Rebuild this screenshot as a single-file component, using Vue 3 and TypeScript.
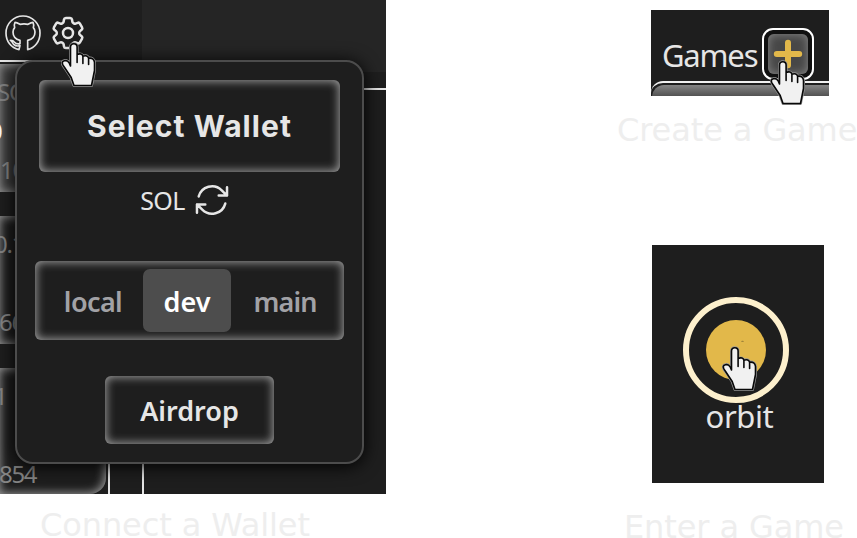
<script setup lang="ts">
import { ref, h } from 'vue'

interface Line { text: string; indent: number; bright?: boolean }
interface Card { id: number; active: boolean; lines: Line[] }

const cards: Card[] = [
  { id: 1, active: true, lines: [
    { text: 'SOL', indent: -3 }, { text: '0', indent: -11, bright: true }, { text: '10', indent: 0 } ] },
  { id: 2, active: false, lines: [
    { text: '0.1', indent: -6 }, { text: '', indent: 0 }, { text: '66', indent: -1 } ] },
  { id: 3, active: false, lines: [
    { text: '1', indent: -6 }, { text: '', indent: 0 }, { text: '854', indent: -1 } ] },
]

const networks = ['local', 'dev', 'main']
const network = ref('dev')

const hand = 'M9.500 24V5a3.3 3.3 0 0 1 6.600 0v7.500c3-1.300 5.200-.3 5.800 1.700 3-1 5-.2 5.700 2 3.300-.5 5.600 1 5.900 4.300v8L30.500 43.500H13l-2.800-8-6.600-10C1.900 23.300 1 21.700 1.300 20.500c.5-2 3.500-2.400 5.200-1.300 1.500 1 2.300 2.800 3 4.800z'

const HandCursor = () =>
  h('svg', { viewBox: '0 0 36 46', width: 36, height: 46 }, [
    h('path', { d: hand, fill: '#f1f1f1', stroke: '#999', 'stroke-width': 3, 'stroke-linejoin': 'round' }),
    h('path', {
      d: hand + 'M16.100 12v8.500M21.900 14.500v7M27.600 16.500v6',
      fill: '#f1f1f1', stroke: '#080808', 'stroke-width': 1.6, 'stroke-linejoin': 'round', 'stroke-linecap': 'round',
    }),
  ])
</script>

<template>
  <main class="guide">
    <figure class="wallet">
      <div class="shot app">
        <aside class="side">
          <header class="icons">
            <svg class="github" viewBox="0 0 108 108" width="36" height="36">
              <path d="M42 104C18 99 3 79 3 54a51 51 0 0 1 102 0c0 25-15 45-37 50V76c14-3 22-11 22-25 0-6-2-10-5-13 2-6 1-12-1-16-5 0-10 3-15 6-8-2-16-2-24 0-5-3-10-6-15-6-2 4-3 10-1 16-3 3-5 7-5 13 0 14 8 22 21 25v10c-8 2-13 0-17-5-3-4-7-6-12-5 6 3 6 8 10 12 5 5 12 6 19 4z" />
            </svg>
            <svg class="gear" viewBox="0 0 24 24" width="40" height="40">
              <path d="M9.594 3.94c.09-.542.56-.94 1.11-.94h2.593c.55 0 1.02.398 1.11.94l.213 1.281c.063.374.313.686.645.87.074.04.147.083.22.127.325.196.72.257 1.075.124l1.217-.456a1.125 1.125 0 0 1 1.37.49l1.296 2.247a1.125 1.125 0 0 1-.26 1.431l-1.003.827c-.293.241-.438.613-.43.992a7.723 7.723 0 0 1 0 .255c-.008.378.137.75.43.991l1.004.827c.424.35.534.955.26 1.43l-1.298 2.247a1.125 1.125 0 0 1-1.369.491l-1.217-.456c-.355-.133-.75-.072-1.076.124a6.47 6.47 0 0 1-.22.128c-.331.183-.581.495-.644.869l-.213 1.281c-.09.543-.56.94-1.11.94h-2.594c-.55 0-1.019-.398-1.11-.94l-.213-1.281c-.062-.374-.312-.686-.644-.87a6.52 6.52 0 0 1-.22-.127c-.325-.196-.72-.257-1.076-.124l-1.217.456a1.125 1.125 0 0 1-1.369-.49l-1.297-2.247a1.125 1.125 0 0 1 .26-1.431l1.004-.827c.292-.24.437-.613.43-.991a6.932 6.932 0 0 1 0-.255c.007-.38-.138-.751-.43-.992l-1.004-.827a1.125 1.125 0 0 1-.26-1.43l1.297-2.247a1.125 1.125 0 0 1 1.37-.491l1.216.456c.356.133.751.072 1.076-.124.072-.044.146-.086.22-.128.332-.183.582-.495.644-.869l.214-1.28Z" />
              <circle cx="12" cy="12" r="3" />
            </svg>
          </header>
          <div class="list">
            <article v-for="card in cards" :key="card.id" class="card" :class="{ active: card.active }">
              <span v-for="(line, i) in card.lines" :key="i" class="line" :class="{ bright: line.bright }"
                :style="{ textIndent: line.indent + 'px' }">{{ line.text }}</span>
            </article>
          </div>
        </aside>
        <section class="content">
          <div class="banner"></div>
          <div class="board"></div>
        </section>

        <div class="popover">
          <button class="glow select">Select Wallet</button>
          <div class="balance">
            <span>SOL</span>
            <svg viewBox="0 0 24 24" width="40" height="40">
              <path d="M16.023 9.348h4.992v-.001M2.985 19.644v-4.992m0 0h4.992m-4.993 0 3.181 3.183a8.25 8.25 0 0 0 13.803-3.7M4.031 9.865a8.25 8.25 0 0 1 13.803-3.7l3.181 3.182m0-4.991v4.99" />
            </svg>
          </div>
          <div class="glow networks">
            <button v-for="n in networks" :key="n" class="network" :class="[n, { on: n === network }]"
              @click="network = n">{{ n }}</button>
          </div>
          <button class="glow airdrop">Airdrop</button>
        </div>
        <HandCursor class="cursor on-gear" />
      </div>
      <figcaption class="c-wallet">Connect a Wallet</figcaption>
    </figure>

    <div class="right">
      <figure class="create">
        <div class="shot games">
          <div class="games-head">
            <span class="games-title">Games</span>
            <button class="add" aria-label="Add">
              <svg viewBox="0 0 40 40" width="40" height="40"><path d="M20 8.800v22.400M8.800 20h22.400" /></svg>
            </button>
          </div>
          <div class="games-list"><div class="games-card"></div></div>
          <HandCursor class="cursor on-add" />
        </div>
        <figcaption class="c-create">Create a Game</figcaption>
      </figure>
      <figure class="enter">
        <div class="shot orbit">
          <svg viewBox="0 0 108 108" width="108" height="108">
            <circle cx="54" cy="54" r="50" fill="none" stroke="#fdf0cd" stroke-width="6" />
            <circle cx="54" cy="54" r="30" fill="#e2b84a" />
            <ellipse cx="60.500" cy="45.300" rx="1.300" ry=".5" fill="#8d7434" />
          </svg>
          <span class="orbit-name">orbit</span>
          <HandCursor class="cursor on-orbit" />
        </div>
        <figcaption class="c-enter">Enter a Game</figcaption>
      </figure>
    </div>
  </main>
</template>

<style>
body { background: #fff; overflow: hidden; }
</style>

<style scoped>
* { box-sizing: border-box; }
.guide {
  display: flex; width: 857px; height: 538px; overflow: hidden;
  font-family: "Noto Sans", "Open Sans", sans-serif; color: #e6e6e6;
}
figure { margin: 0; }
button { font: inherit; color: inherit; border: 0; margin: 0; padding: 0; background: none; }
svg { display: block; flex: none; }
.shot { position: relative; background: #1e1e1e; }
figcaption {
  font: 32px/40px "DejaVu Sans", sans-serif; color: #eee; white-space: nowrap; letter-spacing: -.1px;
}
.wallet { width: 611px; }
.app { display: flex; width: 386px; height: 494px; overflow: hidden; }
.side { display: flex; flex-direction: column; width: 142px; flex: none; }
.icons { display: flex; align-items: center; height: 60px; padding: 6px 0 0 5px; gap: 7px; }
.github { fill: none; stroke: #e6e6e6; stroke-width: 5; stroke-linejoin: round; }
.gear, .balance svg { fill: none; stroke: #e6e6e6; stroke-width: 1.5; stroke-linecap: round; stroke-linejoin: round; }
.list {
  display: flex; flex-direction: column; gap: 24px; width: 110px; height: 434px;
  padding: 2px 2px 0 0; border: solid #e6e6e6; border-width: 2px 2px 0 0; overflow: hidden;
}
.card {
  display: flex; flex-direction: column; flex: none; height: 128px; padding-top: 11px;
  border-radius: 0 16px 16px 0; color: #858585; font-size: 24px;
  box-shadow: inset -1px 0 10px 1px #999;
}
.card:last-child { height: 126px; }
.card.active { background: #3b3b3b; }
.line { height: 40px; line-height: 34px; white-space: nowrap; letter-spacing: -1.3px; }
.bright { color: #fff; }
.card:last-child .line:last-child { padding-top: 1px; }
.content { flex: 1; display: flex; flex-direction: column; }
.banner { height: 72px; background: #252525; }
.board { flex: 1; margin-top: 16px; border: solid #e6e6e6; border-width: 2px 0 0 2px; }

.popover {
  position: absolute; left: 15px; top: 60px; width: 349px; height: 404px;
  display: flex; flex-direction: column; align-items: center; padding-top: 18px;
  background: #1e1e1e; border: 2px solid #4c4c4c; border-radius: 18px;
  box-shadow: 0 2px 18px #000;
}
.glow { border-radius: 6px; box-shadow: inset 0 0 10px 1px #a3a3a3; white-space: nowrap; }
.select { width: 301px; height: 92px; font: 700 30px/92px Inter, sans-serif; letter-spacing: 1.05px; }
.balance { display: flex; align-items: center; gap: 7px; height: 40px; margin: 8px 7px 0 0; font-size: 25px; letter-spacing: -.6px; }
.networks { display: flex; align-items: center; width: 309px; height: 79px; margin-top: 41px; padding: 0 8px; }
.network { width: 105px; height: 63px; padding-top: 2px; border-radius: 7px; font-size: 27px; font-weight: 600; color: #a2a2a6; letter-spacing: -.6px; }
.network.local { width: 100px; }
.network.dev { width: 88px; letter-spacing: 0; }
.network.main { letter-spacing: -.9px; padding-left: 3px; }
.network.on { background: #4d4d4d; color: #fff; }
.airdrop { width: 169px; height: 68px; margin-top: 36px; font-size: 27px; font-weight: 600; }

.cursor { position: absolute; }
.on-gear { left: 61px; top: 42px; }
.on-add { left: 119px; top: 50px; }
.on-orbit { left: 70px; top: 101px; }

.c-wallet { padding: 11px 0 0 40px; }
.right { width: 246px; flex: none; padding-top: 10px; }
.create { height: 235px; }
.games { width: 178px; height: 86px; margin-left: 40px; }
.games-head { display: flex; align-items: center; height: 71px; padding: 17px 0 0 11px; }
.games-title { width: 100px; padding-top: 2px; font-size: 31px; line-height: 52px; white-space: nowrap; letter-spacing: -1.2px; }
.add {
  width: 52px; height: 52px; padding: 4px; border: 2px solid #fff; border-radius: 11px;
  background: #101010; flex: none;
}
.add svg {
  border-radius: 6px; background: #474747; box-shadow: inset 0 0 10px #888;
  fill: none; stroke: #e2b84a; stroke-width: 6; stroke-linecap: round;
}
.games-list { height: 15px; padding: 2px 0 0 1px; border-top: 2px solid #f0f0f0; border-radius: 12px 0 0 0; overflow: hidden; }
.games-card { height: 20px; border-radius: 12px 0 0 0; background: linear-gradient(#858585, #494949 65%); }
.c-create { padding: 14px 0 0 6px; }
.orbit { display: flex; flex-direction: column; align-items: center; width: 172px; height: 238px; margin-left: 41px; padding: 51px 4px 0 0; }
.orbit-name { font-size: 31px; line-height: 32px; margin: -4px 0 0 7px; letter-spacing: -.4px; }
.c-enter { padding: 24px 0 0 13px; }
</style>
